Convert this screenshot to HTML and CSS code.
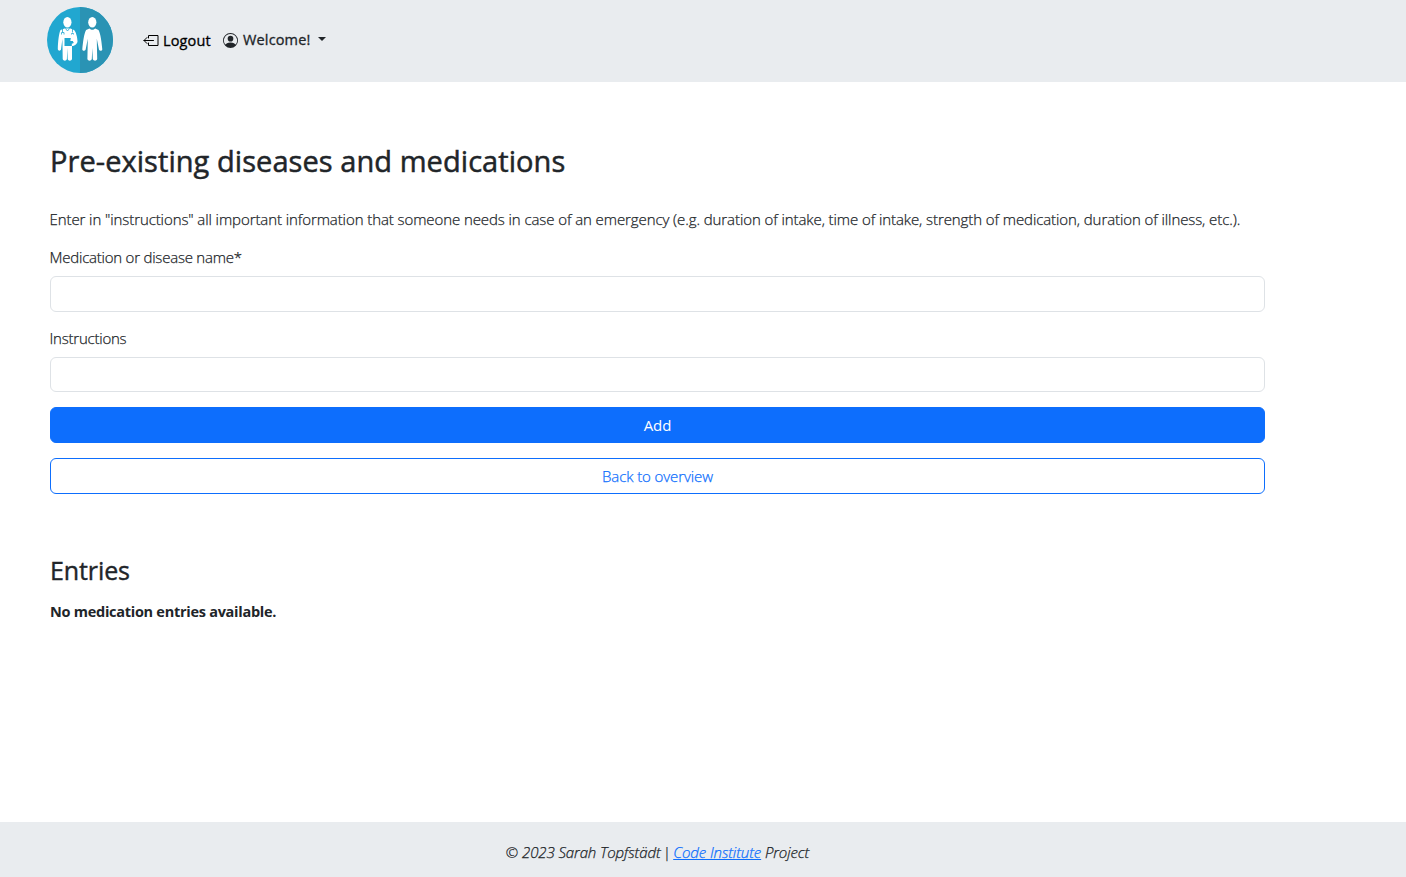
FILE: index.html
```html
<!DOCTYPE html>
<html lang="en">
<head>
<meta charset="utf-8">
<title>Pre-existing diseases and medications</title>
<link rel="stylesheet" href="styles.css">
</head>
<body>
<header class="navbar">
  <a class="brand" href="#" aria-label="Home">
    <svg width="66" height="66" viewBox="0 0 66 66">
      <circle cx="33" cy="33" r="33" fill="#21a7d0"/>
      <path d="M33 0a33 33 0 0 1 0 66z" fill="#2a93b4"/>
      <g fill="#fff">
        <ellipse cx="20.400" cy="15.300" rx="4.100" ry="5.200"/>
        <path d="M17.500 21.500h6l3.500 1.500c1.800 1.500 3.500 7 3.500 11.500-.3 2.500-3 4.500-5.500 4.500v13c-.5 2.200-3.800 2.200-4.300 0l-.4-11-.4 11c-.5 2.200-3.600 2.200-4.200 0l-.3-20-1.400 10.500c-.6 1.700-3 1.500-3.200-.5.200-7 1-15.500 2.700-19z"/>
        <ellipse cx="45.300" cy="15.300" rx="4.100" ry="5.200"/>
        <path d="M42.500 21.500c1.500 1.800 4.100 1.800 5.600 0l3.400 1.500c2 3 3.300 13 3.800 19.500-.3 1.700-2.600 1.800-3.300.3l-2.200-11 .4 20.200c-.6 2.200-3.700 2.200-4.400 0l-.5-11-.5 11c-.7 2.200-3.800 2.200-4.400 0l.4-20.200-2.200 11c-.7 1.500-3 1.400-3.300-.3.500-6.500 1.800-16.500 3.800-19.500z"/>
      </g>
      <path d="M18.500 21.500l2 2.500 2-2.500M15.500 22v3.500M25.500 22v3.500M14.500 27.500v-2h2.500v2M24.500 27.500v-1h2v1" fill="none" stroke="#21a7d0" stroke-width=".8"/>
      <path d="M17.500 31h6.300l-.5 3h2.500l1 2-2 .8v2.200h-7.300z" fill="#21a7d0"/>
    </svg>
  </a>
  <a class="nav-link logout" href="#">
    <svg width="16" height="16" viewBox="0 0 16 16" fill="none" stroke="currentColor" stroke-linecap="round" stroke-linejoin="round"><path d="M5.500 5V2.500h9.500v10h-9.500v-2.500M10.500 7.500H1M4 4.500L1 7.500l3 3"/></svg>
    <span>Logout</span>
  </a>
  <a class="nav-link welcome" href="#">
    <svg width="15" height="15" viewBox="0 0 16 16" fill="currentColor"><path d="M11 6a3 3 0 1 1-6 0 3 3 0 0 1 6 0"/><path fill-rule="evenodd" d="M0 8a8 8 0 1 1 16 0A8 8 0 0 1 0 8m8-7a7 7 0 0 0-5.468 11.370C3.242 11.226 4.805 10 8 10s4.757 1.225 5.468 2.370A7 7 0 0 0 8 1"/></svg>
    <span>Welcome!</span>
    <i class="caret"></i>
  </a>
</header>
<main class="content">
  <h1 class="title">Pre-existing diseases and medications</h1>
  <p class="intro">Enter in "instructions" all important information that someone needs in case of an emergency (e.g. duration of intake, time of intake, strength of medication, duration of illness, etc.).</p>
  <form class="form">
    <label class="label" for="name">Medication or disease name*</label>
    <input class="input" id="name" type="text">
    <label class="label label-instructions" for="instructions">Instructions</label>
    <input class="input input-short" id="instructions" type="text">
    <button class="btn btn-primary" type="button">Add</button>
    <a class="btn btn-outline" href="#">Back to overview</a>
  </form>
  <h2 class="subtitle">Entries</h2>
  <p class="empty">No medication entries available.</p>
</main>
<footer class="footer">
  <p class="copyright">© 2023 Sarah Topfstädt <span class="divider">|</span> <a class="footer-link" href="#">Code Institute</a> Project</p>
</footer>
</body>
</html>
```
FILE: styles.css
```css
* { box-sizing: border-box; }
body {
  margin: 0;
  height: 877px;
  display: flex;
  flex-direction: column;
  background: #fff;
  color: #212529;
  font: 300 15px/24px "Segoe UI", "Open Sans", sans-serif;
  -webkit-text-stroke: .25px;
}
h1, h2, p { margin: 0; white-space: nowrap; }
a { text-decoration: none; }
.navbar {
  height: 82px;
  padding: 0 47px 2px;
  display: flex;
  align-items: center;
  background: #e9ecef;
}
.brand { height: 66px; margin-right: 30px; }
.brand svg { display: block; }
.nav-link {
  display: flex;
  align-items: center;
  color: #212529;
  font-size: 14.500px;
  font-weight: 400;
  line-height: 22px;
  letter-spacing: .15px;
  -webkit-text-stroke: .3px;
}
.logout { color: #000; gap: 4px; width: 80px; padding-top: 1px; }
.welcome { gap: 5px; }
.caret {
  margin-left: 3px;
  margin-bottom: 2px;
  border: 4px solid transparent;
  border-top-color: #212529;
  border-bottom: 0;
}
.content { flex: 1; width: 1265px; padding: 58px 0 0 50px; }
.title { font-size: 29px; line-height: 42px; font-weight: 400; letter-spacing: .06px; -webkit-text-stroke: .5px; }
.intro { margin-top: 25px; margin-left: -.5px; letter-spacing: -.085px; }
.form { display: flex; flex-direction: column; margin-top: 14px; }
.label { margin-left: -.5px; letter-spacing: -.22px; }
.label-instructions { margin-top: 14px; }
.input {
  height: 36px;
  margin-top: 7px;
  border: 1px solid #dee2e6;
  border-radius: 6px;
  background: #fff;
  font: inherit;
  padding: 0 12px;
}
.input-short { height: 35px; }
.btn {
  height: 36px;
  margin-top: 15px;
  padding: 0;
  border: 1px solid #0d6efd;
  border-radius: 6px;
  text-align: center;
  font: inherit;
  line-height: 35px;
  letter-spacing: -.1px;
  color: #0d6efd;
}
.btn-primary { background: #0d6efd; color: #fff; font-weight: 400; -webkit-text-stroke: 0; }
.subtitle { margin-top: 59px; font-size: 25px; line-height: 34px; font-weight: 400; letter-spacing: -.1px; -webkit-text-stroke: .4px; }
.empty { margin-top: 13px; font-size: 14.500px; font-weight: 700; letter-spacing: -.27px; -webkit-text-stroke: 0; }
.footer { height: 55px; padding: 18px 91px 0 0; background: #e9ecef; text-align: center; }
.copyright { font-style: italic; letter-spacing: -.1px; }
.divider { margin: 0 -1px 0 -2px; }
.footer-link { color: #0d6efd; text-decoration: underline; }
```
